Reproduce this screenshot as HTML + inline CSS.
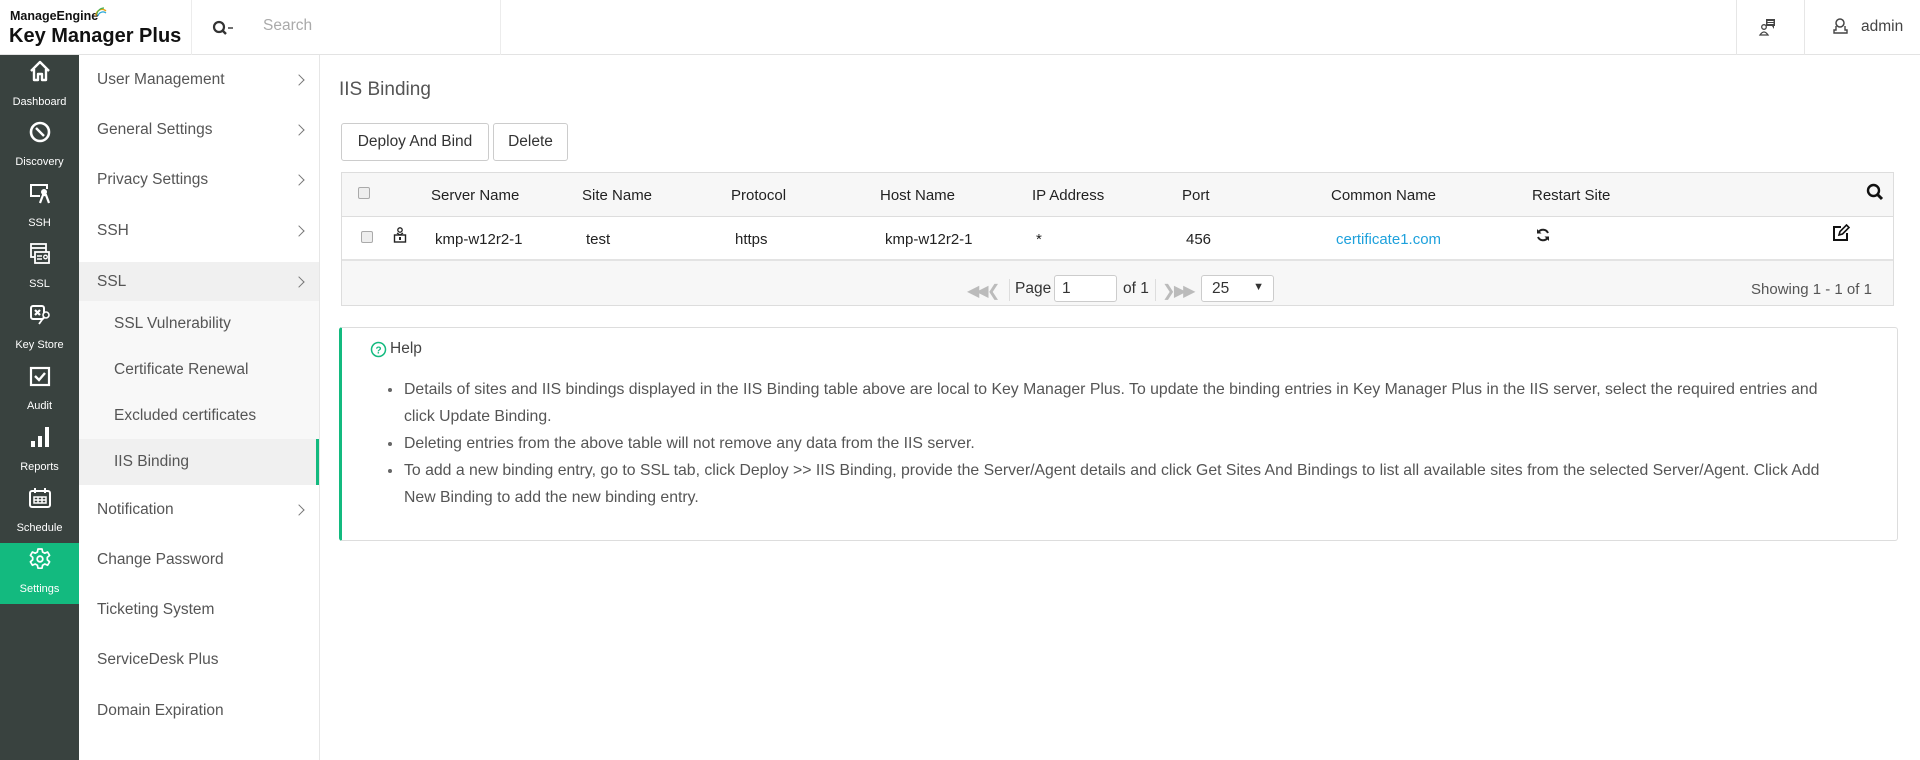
<!DOCTYPE html>
<html><head><meta charset="utf-8"><style>
*{box-sizing:border-box;margin:0;padding:0}
body{width:1920px;height:760px;overflow:hidden;background:#fff;font-family:"Liberation Sans",Arial,sans-serif;color:#333;position:relative}
.abs{position:absolute}
#hdr{left:0;top:0;width:1920px;height:55px;border-bottom:1px solid #e3e3e3;background:#fff}
#side{left:0;top:55px;width:79px;height:705px;background:#39423f}
.si{position:absolute;left:0;width:79px;height:61px;color:#fff;font-size:11px;text-align:center}
.si svg{position:absolute;left:28px;top:4px}
.si span{position:absolute;left:0;right:0;top:40px}
#sub{left:79px;top:55px;width:241px;height:705px;border-right:1px solid #e6e6e6;background:#fff}
.mi{position:absolute;left:0;width:240px;font-size:15.5px;color:#555;padding-left:18px}
.mi .ch{position:absolute;right:16px;top:50%;width:8px;height:8px;border-top:1px solid #777;border-right:1px solid #777;transform:translateY(-50%) rotate(45deg)}
.th{position:absolute;top:187px;font-size:15px;color:#222}
.td{position:absolute;top:231px;font-size:15px;color:#222}
.cb{position:absolute;width:12px;height:12px;border:1px solid #aaa;border-radius:2px;background:#eee}
.help li{font-size:15.8px;color:#555;line-height:27px;list-style:none;position:relative;white-space:nowrap}
.help li:before{content:"";position:absolute;left:-16px;top:12px;width:4px;height:4px;border-radius:50%;background:#666}
</style></head><body>
<div id="hdr" class="abs">
 <div class="abs" style="left:10px;top:9px;font-size:12.5px;font-weight:bold;color:#111">ManageEngine</div>
 <svg class="abs" style="left:94px;top:5px" width="14" height="12"><path d="M2 11 A6 6 0 0 1 12 6" stroke="#e8a317" stroke-width="1.4" fill="none"/><path d="M4 11 A5 5 0 0 1 12 8" stroke="#2aa8d8" stroke-width="1.2" fill="none"/><path d="M3 9 A7 7 0 0 1 10 3" stroke="#4caf50" stroke-width="1.2" fill="none"/></svg>
 <div class="abs" style="left:9px;top:25px;font-size:20px;font-weight:bold;color:#111">Key Manager Plus</div>
 <div class="abs" style="left:191px;top:0;width:1px;height:55px;background:#ececec"></div>
 <svg class="abs" style="left:212px;top:20px" width="22" height="16"><circle cx="7" cy="7" r="5" stroke="#333" stroke-width="2.2" fill="none"/><path d="M10.5 10.5 L14 14" stroke="#333" stroke-width="2.4"/><path d="M16 8 h5" stroke="#333" stroke-width="1.4"/></svg>
 <div class="abs" style="left:263px;top:17px;font-size:15.5px;color:#aaa">Search</div>
 <div class="abs" style="left:500px;top:0;width:1px;height:55px;background:#ececec"></div>
 <div class="abs" style="left:1736px;top:0;width:1px;height:55px;background:#e6e6e6"></div>
 <div class="abs" style="left:1804px;top:0;width:1px;height:55px;background:#e6e6e6"></div>
 <svg class="abs" style="left:1758px;top:15px" width="22" height="22"><rect x="8" y="4" width="9" height="7" fill="#444"/><path d="M14 11 l2 3 v-3z" fill="#444"/><path d="M9.5 6.5h6M9.5 8.5h6" stroke="#fff" stroke-width="0.9"/><circle cx="6" cy="12" r="2.3" stroke="#444" stroke-width="1.3" fill="none"/><path d="M2 20 q4-6 8 0z" stroke="#444" stroke-width="1.3" fill="none"/></svg>
 <svg class="abs" style="left:1832px;top:17px" width="18" height="18"><circle cx="8" cy="6" r="4" stroke="#444" stroke-width="1.5" fill="none"/><path d="M4 9 v4 h-2 v3 h13 v-3 h-2 v-4" stroke="#444" stroke-width="1.4" fill="none"/></svg>
 <div class="abs" style="left:1861px;top:18px;font-size:15.5px;color:#444">admin</div>
</div>

<div id="side" class="abs">
 <div class="si" style="top:0"><svg width="24" height="24" viewBox="0 0 24 24"><path d="M3 12 L12 3 L21 12 M6 10 V21 H10 V15 H14 V21 H18 V10" stroke="#fff" stroke-width="2.4" fill="none" stroke-linejoin="round"/></svg><span style="top:41px">Dashboard</span></div>
 <div class="si" style="top:61px"><svg width="24" height="24" viewBox="0 0 24 24"><circle cx="12" cy="12" r="9" stroke="#fff" stroke-width="2.6" fill="none"/><path d="M8 8 L16 16" stroke="#fff" stroke-width="2.4"/></svg><span>Discovery</span></div>
 <div class="si" style="top:122px"><svg width="24" height="24" viewBox="0 0 24 24"><path d="M12 15 H3 V4 H19 V8" stroke="#fff" stroke-width="2" fill="none"/><circle cx="16" cy="11" r="3" fill="#fff"/><path d="M12 22 L15 14 H18 L21 22" stroke="#fff" stroke-width="2.2" fill="none"/></svg><span>SSH</span></div>
 <div class="si" style="top:183px"><svg width="24" height="24" viewBox="0 0 24 24"><rect x="3" y="2" width="15" height="13" stroke="#fff" stroke-width="1.8" fill="none"/><path d="M3 6 H18" stroke="#fff" stroke-width="1.8"/><rect x="7" y="10" width="14" height="11" fill="#39423f" stroke="#fff" stroke-width="1.8"/><path d="M9 14h5M9 17h5" stroke="#fff" stroke-width="1.5"/><circle cx="17.5" cy="15" r="1.8" stroke="#fff" stroke-width="1.3" fill="none"/></svg><span>SSL</span></div>
 <div class="si" style="top:244px"><svg width="24" height="24" viewBox="0 0 24 24"><rect x="3" y="3" width="13" height="13" rx="2" stroke="#fff" stroke-width="2" fill="none"/><path d="M7 7 L12 12 M12 7 L7 12" stroke="#fff" stroke-width="2.2"/><circle cx="18" cy="12" r="3" stroke="#fff" stroke-width="1.6" fill="#39423f"/><path d="M16 14 L11 21" stroke="#fff" stroke-width="1.8"/></svg><span>Key Store</span></div>
 <div class="si" style="top:305px"><svg width="24" height="24" viewBox="0 0 24 24"><rect x="3" y="4" width="18" height="17" stroke="#fff" stroke-width="2.2" fill="none"/><path d="M7 12 L11 16 L17 9" stroke="#fff" stroke-width="2.4" fill="none"/></svg><span>Audit</span></div>
 <div class="si" style="top:366px"><svg width="24" height="24" viewBox="0 0 24 24"><rect x="3" y="16" width="4" height="6" fill="#fff"/><rect x="10" y="11" width="4" height="11" fill="#fff"/><rect x="17" y="2" width="4" height="20" fill="#fff"/></svg><span>Reports</span></div>
 <div class="si" style="top:427px"><svg width="24" height="24" viewBox="0 0 24 24"><rect x="2" y="5" width="20" height="16" rx="2" stroke="#fff" stroke-width="2" fill="none"/><path d="M7 2v5M17 2v5" stroke="#fff" stroke-width="2"/><path d="M6 11h12v6H6z M10 11v6 M14 11v6 M6 14h12" stroke="#fff" stroke-width="1.5" fill="none"/></svg><span>Schedule</span></div>
 <div class="si" style="top:488px;background:#13ba7f"><svg width="24" height="24" viewBox="0 0 24 24"><path d="M10 2h4l.6 3 2.2 1.2 2.8-1.2 2 3.4-2.3 2 v2.4l2.3 2-2 3.4-2.8-1.2-2.2 1.2-.6 3h-4l-.6-3-2.2-1.2-2.8 1.2-2-3.4 2.3-2v-2.4l-2.3-2 2-3.4 2.8 1.2 2.2-1.2z" stroke="#fff" stroke-width="1.7" fill="none" stroke-linejoin="round"/><circle cx="12" cy="12" r="2.8" stroke="#fff" stroke-width="1.8" fill="none"/></svg><span>Settings</span></div>
</div>

<div id="sub" class="abs">
 <div class="mi" style="top:0;height:50px;line-height:50px">User Management<i class="ch"></i></div>
 <div class="mi" style="top:50px;height:50px;line-height:50px">General Settings<i class="ch"></i></div>
 <div class="mi" style="top:100px;height:50px;line-height:50px">Privacy Settings<i class="ch"></i></div>
 <div class="mi" style="top:151px;height:50px;line-height:50px">SSH<i class="ch"></i></div>
 <div class="mi" style="top:207px;height:39px;line-height:39px;background:#f0f0f0">SSL<i class="ch"></i></div>
 <div class="abs" style="left:0;top:246px;width:240px;height:184px;background:#f8f8f8"></div>
 <div class="mi" style="top:246px;height:46px;line-height:46px;padding-left:35px">SSL Vulnerability</div>
 <div class="mi" style="top:292px;height:46px;line-height:46px;padding-left:35px">Certificate Renewal</div>
 <div class="mi" style="top:338px;height:46px;line-height:46px;padding-left:35px">Excluded certificates</div>
 <div class="mi" style="top:384px;height:46px;line-height:46px;padding-left:35px;background:#f0f0f0;border-right:3px solid #13ba7f">IIS Binding</div>
 <div class="mi" style="top:430px;height:50px;line-height:50px">Notification<i class="ch"></i></div>
 <div class="mi" style="top:480px;height:50px;line-height:50px">Change Password</div>
 <div class="mi" style="top:530px;height:50px;line-height:50px">Ticketing System</div>
 <div class="mi" style="top:580px;height:50px;line-height:50px">ServiceDesk Plus</div>
 <div class="mi" style="top:631px;height:50px;line-height:50px">Domain Expiration</div>
</div>

<div class="abs" style="left:339px;top:79px;font-size:19px;color:#555">IIS Binding</div>
<div class="abs" style="left:341px;top:123px;width:148px;height:38px;border:1px solid #ccc;border-radius:3px;font-size:15.5px;line-height:36px;text-align:center;color:#333;white-space:nowrap">Deploy And Bind</div>
<div class="abs" style="left:493px;top:123px;width:75px;height:38px;border:1px solid #ccc;border-radius:3px;font-size:15.5px;line-height:36px;text-align:center;color:#333">Delete</div>

<div class="abs" style="left:341px;top:172px;width:1553px;height:134px;border:1px solid #ddd;background:#f7f7f7"></div>
<div class="abs" style="left:342px;top:216px;width:1551px;height:45px;background:#fff;border-top:1px solid #ddd;border-bottom:2px solid #e3e3e3"></div>
<div class="cb" style="left:358px;top:187px"></div>
<div class="th" style="left:431px">Server Name</div>
<div class="th" style="left:582px">Site Name</div>
<div class="th" style="left:731px">Protocol</div>
<div class="th" style="left:880px">Host Name</div>
<div class="th" style="left:1032px">IP Address</div>
<div class="th" style="left:1182px">Port</div>
<div class="th" style="left:1331px">Common Name</div>
<div class="th" style="left:1532px">Restart Site</div>
<svg class="abs" style="left:1866px;top:183px" width="18" height="18"><circle cx="7.5" cy="7.5" r="5.5" stroke="#111" stroke-width="2.4" fill="none"/><path d="M11.5 11.5 L16 16" stroke="#111" stroke-width="3"/></svg>
<div class="cb" style="left:361px;top:231px"></div>
<svg class="abs" style="left:393px;top:227px" width="14" height="16"><circle cx="7" cy="3" r="2.2" stroke="#222" stroke-width="1.3" fill="none"/><path d="M4 6 L7 8 L10 6" stroke="#222" stroke-width="1.3" fill="none"/><rect x="1.5" y="8" width="11" height="7" stroke="#222" stroke-width="1.4" fill="none"/><rect x="6" y="10" width="2" height="3" fill="#222"/></svg>
<div class="td" style="left:435px">kmp-w12r2-1</div>
<div class="td" style="left:586px">test</div>
<div class="td" style="left:735px">https</div>
<div class="td" style="left:885px">kmp-w12r2-1</div>
<div class="td" style="left:1036px">*</div>
<div class="td" style="left:1186px">456</div>
<div class="td" style="left:1336px;color:#1ea1dc">certificate1.com</div>
<svg class="abs" style="left:1535px;top:227px" width="16" height="16" viewBox="0 0 16 16"><path d="M13 6 A5.5 5.5 0 0 0 3.5 5" stroke="#222" stroke-width="2" fill="none"/><path d="M2 2 V6.5 H6.5z" fill="#222"/><path d="M3 10 A5.5 5.5 0 0 0 12.5 11" stroke="#222" stroke-width="2" fill="none"/><path d="M14 14 V9.5 H9.5z" fill="#222"/></svg>
<svg class="abs" style="left:1832px;top:224px" width="18" height="18" viewBox="0 0 18 18"><path d="M9 3 H2 V16 H15 V9" stroke="#111" stroke-width="2" fill="none"/><path d="M7 11 L8 7.5 L14.5 1 L17 3.5 L10.5 10 Z" stroke="#111" stroke-width="1.6" fill="none"/></svg>

<div class="abs" style="left:967px;top:281px;font-size:16px;color:#bbb;letter-spacing:-3px">&#9664;&#9664; &#10094;</div>
<div class="abs" style="left:1009px;top:279px;width:1px;height:22px;background:#ddd"></div>
<div class="abs" style="left:1015px;top:280px;font-size:15.5px;color:#333">Page</div>
<div class="abs" style="left:1054px;top:275px;width:63px;height:27px;border:1px solid #ccc;border-radius:3px;background:#fff;font-size:15.5px;padding:4px 7px;color:#333">1</div>
<div class="abs" style="left:1123px;top:280px;font-size:15.5px;color:#333">of 1</div>
<div class="abs" style="left:1155px;top:279px;width:1px;height:22px;background:#ddd"></div>
<div class="abs" style="left:1162px;top:281px;font-size:16px;color:#bbb;letter-spacing:-3px">&#10095; &#9654;&#9654;</div>
<div class="abs" style="left:1201px;top:275px;width:73px;height:27px;border:1px solid #ccc;border-radius:3px;background:#fff;font-size:15.5px;padding:4px 10px;color:#333">25<span style="position:absolute;right:9px;top:5px;font-size:11px">&#9660;</span></div>
<div class="abs" style="left:1751px;top:281px;font-size:15px;color:#555">Showing 1 - 1 of 1</div>

<div class="abs help" style="left:339px;top:327px;width:1559px;height:214px;border:1px solid #ddd;border-left:3px solid #13ba7f;border-radius:3px">
 <svg class="abs" style="left:28px;top:13px" width="17" height="17"><circle cx="8.5" cy="8.5" r="7" stroke="#13ba7f" stroke-width="1.5" fill="none"/><text x="8.5" y="12.5" font-size="10" font-weight="bold" text-anchor="middle" fill="#13ba7f" font-family="Liberation Sans">?</text></svg>
 <div class="abs" style="left:48px;top:12px;font-size:15.5px;color:#444">Help</div>
 <ul class="abs" style="left:62px;top:48px">
  <li>Details of sites and IIS bindings displayed in the IIS Binding table above are local to Key Manager Plus. To update the binding entries in Key Manager Plus in the IIS server, select the required entries and<br>click Update Binding.</li>
  <li>Deleting entries from the above table will not remove any data from the IIS server.</li>
  <li>To add a new binding entry, go to SSL tab, click Deploy &gt;&gt; IIS Binding, provide the Server/Agent details and click Get Sites And Bindings to list all available sites from the selected Server/Agent. Click Add<br>New Binding to add the new binding entry.</li>
 </ul>
</div>
</body></html>
